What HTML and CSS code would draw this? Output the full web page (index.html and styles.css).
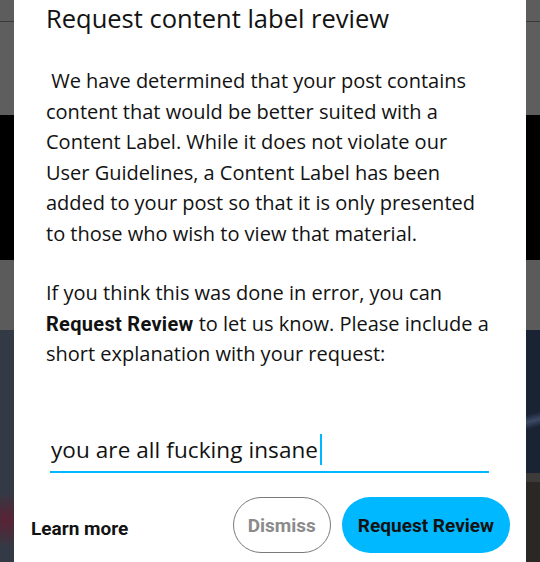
FILE: index.html
```html
<!DOCTYPE html>
<html>
<head>
	<meta charset="utf-8">
	<meta name="viewport" content="width=device-width, initial-scale=1">
	<title>Request content label review</title>
	<link rel="stylesheet" href="styles.css">
</head>
<body>
	<div class="backdrop">
		<div class="topbar"></div>
		<div class="header"></div>
		<div class="video"></div>
		<div class="strip"></div>
		<div class="photo"></div>
	</div>

	<div class="dialog">
		<h1 class="dialog-title">Request content label review</h1>
		<p class="dialog-text">&nbsp;We have determined that your post contains<br>
			content that would be better suited with a<br>
			Content Label. While it does not violate our<br>
			User Guidelines, a Content Label has been<br>
			added to your post so that it is only presented<br>
			to those who wish to view that material.</p>
		<p class="dialog-text second">If you think this was done in error, you can<br>
			<b>Request Review</b> to let us know. Please include a<br>
			short explanation with your request:</p>

		<div class="field">
			<span class="field-value">you are all fucking insane</span><span class="caret"></span>
		</div>

		<div class="actions">
			<a class="learn">Learn more</a>
			<div class="buttons">
				<button class="btn btn-outline">Dismiss</button>
				<button class="btn btn-primary">Request Review</button>
			</div>
		</div>
	</div>
</body>
</html>
```

FILE: styles.css
```css
body{
	margin: 0;
	width: 540px;
	height: 562px;
	overflow: hidden;
	position: relative;
	font-family: "Open Sans", "Liberation Sans", sans-serif;
	color: #121212;
}

/* page behind the dialog, already dimmed */
.backdrop{
	display: flex;
	flex-direction: column;
	height: 562px;
}
.topbar{
	height: 21px;
	background-color: #5d5d5d;
	border-bottom: 1px solid #3a3a3a;
}
.header{
	height: 93px;
	background-color: #5e5e5e;
}
.video{
	height: 145px;
	background-color: #000;
}
.strip{
	height: 70px;
	background-color: #5b5b5b;
}
.photo{
	flex: 1;
	background:
		radial-gradient(ellipse 30px 28px at 6px 190px, #5a2233, transparent),
		linear-gradient(to right, #333a45 0 50%, transparent 50%),
		linear-gradient(165deg, transparent 0 60%, #3b4a66 62%, transparent 64%),
		linear-gradient(to bottom, #1a2334 0 143px, #3d3b39 143px 152px, #2b2724 152px);
}

.dialog{
	position: absolute;
	top: 0;
	bottom: 0;
	left: 14px;
	width: 512px;
	box-sizing: border-box;
	padding: 2px 20px 0 32px;
	background-color: #fff;
}
.dialog-title{
	margin: 0;
	font-size: 25.5px;
	font-weight: normal;
	line-height: 32px;
}
.dialog-text{
	margin: 32px 0 0 0;
	font-size: 20px;
	line-height: 30.5px;
	white-space: nowrap;
}
.dialog-text.second{
	margin-top: 29px;
}
.dialog-text b{
	font-family: Roboto, "Liberation Sans", sans-serif;
	font-weight: bold;
	letter-spacing: 0.3px;
}

.field{
	display: flex;
	margin: 64.5px 17px 0 4px;
	padding-bottom: 6px;
	border-bottom: 2px solid #00b8ff;
	font-size: 22.5px;
	line-height: 31px;
}
.field-value{
	margin-left: 1px;
	letter-spacing: 0.08px;
}
.caret{
	width: 2px;
	margin-left: 2px;
	background-color: #00b8ff;
}

.actions{
	display: flex;
	align-items: center;
	justify-content: space-between;
	margin: 24px -4px 0 -15px;
	font-family: Roboto, "Liberation Sans", sans-serif;
	font-weight: bold;
	font-size: 19px;
}
.learn{
	margin-top: 7px;
	color: #121212;
}
.buttons{
	display: flex;
	gap: 11px;
}
.btn{
	height: 56px;
	padding: 0 15px;
	border-radius: 28px;
	font: inherit;
	cursor: pointer;
}
.btn-outline{
	padding: 0 14px;
	border: 1.5px solid #7a7a7a;
	background-color: #fff;
	color: #8b8b8b;
}
.btn-primary{
	padding: 0 16px;
	border: none;
	background-color: #00b8ff;
	color: #121212;
}
```
